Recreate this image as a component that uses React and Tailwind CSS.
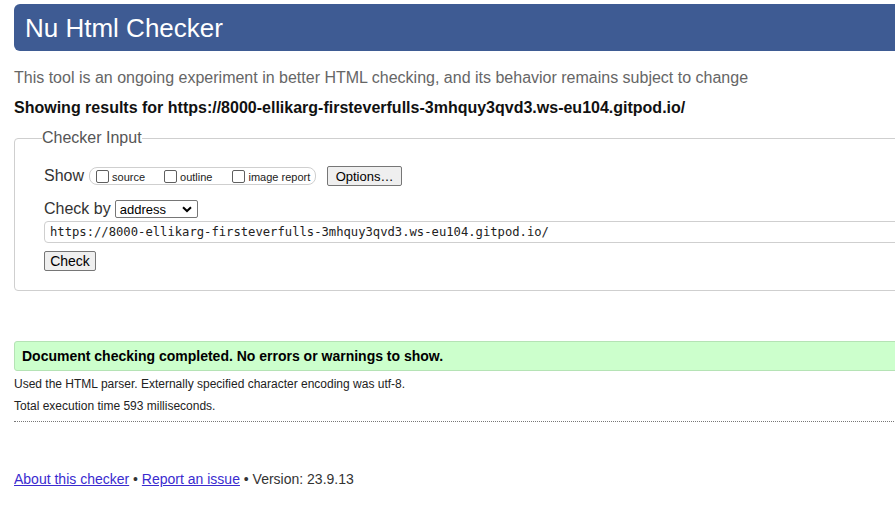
import React from 'react';

function Box({ label, className = '' }) {
  return (
    <span className={`flex items-center ${className}`}>
      <span className="w-[13px] h-[13px] border border-[#5f5f5f] rounded-[2px] bg-white" />
      <span className="ml-[3px] text-[11px] text-[#222] leading-none pt-[3px]">{label}</span>
    </span>
  );
}

export default function App() {
  return (
    <div className="w-[895px] h-[513px] overflow-hidden bg-white font-['Liberation_Sans',Arial,sans-serif]">
      <div className="w-[910px] pl-[14px] pt-[4px]">
        {/* Header */}
        <div className="h-[47px] rounded-[6px] bg-[#3e5b93] flex items-center pl-[11px]">
          <h1 className="text-[26px] text-white leading-none">Nu Html Checker</h1>
        </div>

        <p className="mt-[17px] text-[16px] leading-[20px] text-[#666]">
          This tool is an ongoing experiment in better HTML checking, and its behavior remains subject to change
        </p>
        <p className="mt-[10px] text-[16px] leading-[20px] font-bold text-[#111]">
          Showing results for https://8000-ellikarg-firsteverfulls-3mhquy3qvd3.ws-eu104.gitpod.io/
        </p>

        {/* Checker input */}
        <fieldset className="mt-[10px] border border-[#cfcfcf] rounded-[4px] pl-[27px] pb-[17px]">
          <legend className="text-[16px] leading-[20px] text-[#555]">Checker Input</legend>
          <div className="pl-[2px]">
            <div className="mt-[17px] h-[22px] flex items-center">
              <span className="text-[16px] text-[#333]">Show</span>
              <div className="ml-[5px] h-[18px] w-[227px] border border-[#cfcfcf] rounded-[8px] flex items-center pl-[6px]">
                <Box label="source" />
                <Box label="outline" className="ml-[19px]" />
                <Box label="image report" className="ml-[20px]" />
              </div>
              <button className="ml-[11px] h-[20px] w-[75px] bg-[#efefef] border border-[#767676] rounded-[2px] text-[13px] text-black leading-none">
                Options…
              </button>
            </div>

            <div className="mt-[12px] h-[20px] flex items-center">
              <span className="text-[16px] text-[#333]">Check by</span>
              <div className="ml-[4px] h-[18px] w-[83px] border border-[#767676] rounded-[2px] flex items-center justify-between pl-[4px] pr-[5px]">
                <span className="text-[13px] text-black leading-none">address</span>
                <svg width="10" height="7" viewBox="0 0 10 7">
                  <path d="M1 1.2 L5 5 L9 1.2" fill="none" stroke="#000" strokeWidth="2" />
                </svg>
              </div>
            </div>

            <div className="mt-[2px] h-[22px] border border-[#cfcfcf] rounded-l-[4px] flex items-center pl-[5px]">
              <span className="font-['DejaVu_Sans_Mono',monospace] text-[12.2px] text-[#222] leading-none">
                https://8000-ellikarg-firsteverfulls-3mhquy3qvd3.ws-eu104.gitpod.io/
              </span>
            </div>

            <button className="mt-[8px] h-[20px] w-[52px] bg-[#efefef] border border-[#767676] rounded-[2px] text-[14px] text-black leading-none">
              Check
            </button>
          </div>
        </fieldset>

        {/* Result */}
        <div className="mt-[50px] h-[30px] bg-[#ccffcc] border border-[#b5e3b5] rounded-l-[3px] flex items-center pl-[7px]">
          <span className="text-[14px] font-bold text-black">Document checking completed. No errors or warnings to show.</span>
        </div>
        <p className="mt-[2px] text-[12px] leading-[22px] text-[#222]">
          Used the HTML parser. Externally specified character encoding was utf-8.
        </p>
        <p className="text-[12px] leading-[22px] text-[#222]">Total execution time 593 milliseconds.</p>
        <div className="mt-[4px] border-t border-dotted border-[#777]" />

        {/* Footer */}
        <p className="mt-[47px] text-[14px] leading-[20px] text-[#333]">
          <a href="#" className="text-[#3a2bcf] underline">About this checker</a>
          {' • '}
          <a href="#" className="text-[#3a2bcf] underline">Report an issue</a>
          {' • Version: 23.9.13'}
        </p>
      </div>
    </div>
  );
}
